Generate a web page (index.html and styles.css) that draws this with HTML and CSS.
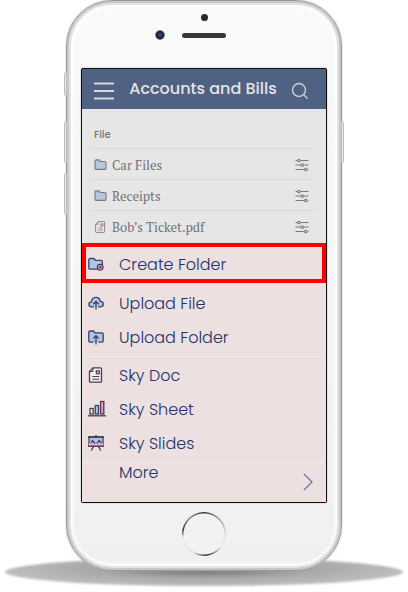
FILE: index.html
```
<!DOCTYPE html>
<html lang="en">
<head>
<meta charset="utf-8">
<meta name="viewport" content="width=device-width, initial-scale=1">
<title>Accounts and Bills</title>
<link rel="stylesheet" href="styles.css">
</head>
<body>
<svg class="defs" aria-hidden="true">
  <symbol id="folder" viewBox="0 0 14 12"><path d="M1 2.500V10q0 1.300 1.300 1.300h9.400q1.300 0 1.300-1.300V4q0-1.300-1.300-1.300H6.800L5.300 1H2.400Q1 1 1 2.500Z"/></symbol>
  <symbol id="sliders" viewBox="0 0 14 14"><path d="M.5 2.500h1.800m3 0h8.200M.5 7h5.200m3 0h4.800M.5 11.500h9m3 0h1"/><circle cx="3.800" cy="2.500" r="1.300"/><circle cx="7.200" cy="7" r="1.300"/><circle cx="10.800" cy="11.500" r="1.300"/></symbol>
  <symbol id="doc" viewBox="0 0 16 16"><path class="paper" d="M5 .8h7.500q1 0 1 1v12.400q0 1-1 1h-10q-1 0-1-1V4.500Z"/><path class="thin" d="M5 1v3.500H1.700M4.300 9.500h7M4.300 12.200h7"/><rect class="pink" x="8.300" y="3.800" width="3" height="3"/></symbol>
</svg>
<div class="stage">
  <div class="phone">
    <span class="side mute"></span><span class="side up"></span><span class="side down"></span><span class="side power"></span>
    <div class="top">
      <span class="sensor"></span>
      <span class="camera"></span>
      <span class="speaker"></span>
    </div>
    <main class="screen">
      <header class="bar">
        <button class="icon-button" type="button" aria-label="Menu"><svg width="22" height="18" viewBox="0 0 22 18"><path d="M1 1.500h20M1 9h20M1 16.500h20" stroke="#d9d6dc" stroke-width="2"/></svg></button>
        <h1>Accounts and Bills</h1>
        <button class="icon-button" type="button" aria-label="Search"><svg width="18" height="18" viewBox="0 0 18 18" fill="none" stroke="#d0cdd4" stroke-width="1.400"><circle cx="8" cy="8" r="6.500"/><path d="m12.500 12.500 4 4"/></svg></button>
      </header>
      <section class="files">
        <h2>File</h2>
        <ul>
          <li><svg class="file-icon" aria-hidden="true"><use href="#folder"/></svg><a href="#car">Car Files</a><button class="icon-button" type="button" aria-label="Car Files options"><svg class="sliders"><use href="#sliders"/></svg></button></li>
          <li><svg class="file-icon" aria-hidden="true"><use href="#folder"/></svg><a href="#receipts">Receipts</a><button class="icon-button" type="button" aria-label="Receipts options"><svg class="sliders"><use href="#sliders"/></svg></button></li>
          <li><svg class="file-icon pdf" aria-hidden="true"><use href="#doc"/></svg><a href="#ticket">Bob’s Ticket.pdf</a><button class="icon-button" type="button" aria-label="Ticket options"><svg class="sliders"><use href="#sliders"/></svg></button></li>
        </ul>
      </section>
      <nav class="sheet">
        <button class="action highlight" type="button">
          <svg class="glyph" viewBox="0 0 16 16"><path class="blue" d="M.8 3.800V12q0 1.200 1.200 1.200h11q1.300 0 1.300-1.200V5.600q0-1.300-1.300-1.300H7.500L5.800 2.500H2Q.8 2.500.8 3.800Z"/><circle class="pink" cx="12.200" cy="11.300" r="2.900"/><path class="thin" d="M12.200 9.700v3.200m-1.600-1.600h3.200"/></svg>
          Create Folder</button>
        <div class="group">
          <button class="action" type="button">
            <svg class="glyph" viewBox="0 0 16 16"><path class="blue" d="M6 11.800H3.500C-.2 11.500.2 7 3.500 6.800 3.800 1 11.600.8 12.300 6.400c4 .1 4 5.200.3 5.400H10"/><path class="line" d="M8 14.500V6.800M5.300 9.200 8 6.500l2.700 2.700"/></svg>
            Upload File</button>
          <button class="action" type="button">
            <svg class="glyph" viewBox="0 0 16 16"><path class="blue" d="M5.500 13.200H2q-1.200 0-1.200-1.200V3.300Q.8 2 2 2h3.300L7 3.800h6.800q1.400 0 1.400 1.300V12q0 1.200-1.400 1.200h-3.300"/><path class="line" d="M8 15.500V6.800M5.300 9.400 8 6.700l2.700 2.700"/></svg>
            Upload Folder</button>
        </div>
        <div class="group">
          <button class="action" type="button"><svg class="glyph"><use href="#doc"/></svg>Sky Doc</button>
          <button class="action" type="button">
            <svg class="glyph wide" viewBox="0 0 18 16"><path class="line" d="M0 14.800h18"/><rect class="paper" x="2" y="7.500" width="3.200" height="5.500"/><rect class="blue" x="7.300" y="4.500" width="3.200" height="8.500"/><rect class="pink heavy" x="12.600" y=".5" width="3.200" height="12.500"/></svg>
            Sky Sheet</button>
          <button class="action" type="button">
            <svg class="glyph" viewBox="0 0 16 16"><path class="blue" d="M1 2h14v9H1Z"/><path class="hill" d="M1 11V8.500L4 6l3 3 1 .3L9 8.500 11.500 6 15 8.500V11Z"/><path class="line" d="M0 2h16M8 0v2M0 11.200h16M5.500 11.500l-2.200 4M10.500 11.500l2.200 4M3 8l1.500-2.500L7 8.500M9 8.500l2-3L13.500 8"/></svg>
            Sky Slides</button>
        </div>
        <button class="more" type="button"><span>More</span><svg width="10" height="18" viewBox="0 0 10 18" fill="none" stroke="#68739b" stroke-width="1.200"><path d="m1 1 8 8-8 8"/></svg></button>
      </nav>
    </main>
    <div class="chin">
      <button class="home" type="button" aria-label="Home"></button>
    </div>
  </div>
</div>
</body>
</html>
```
FILE: styles.css
```
* { box-sizing: border-box; }
body { margin: 0; background: #fff; font-family: Poppins, Inter, sans-serif; }
button { border: 0; padding: 0; margin: 0; background: none; color: inherit; font: inherit; text-align: left; }
h1, h2, ul { margin: 0; padding: 0; }
a { color: inherit; text-decoration: none; }
.defs { position: absolute; width: 0; height: 0; }
.stage { position: relative; z-index: 0; max-width: 408px; margin: 0 auto; padding: 0 66px 21px; }
.stage::before {
  content: ""; position: absolute; z-index: -1; left: 5px; right: 5px; bottom: 6px; height: 28px;
  border-radius: 50%; filter: blur(1px);
  background: radial-gradient(ellipse at 50% 35%, #5e5e5e, #a8a8a8 40%, #c0c0c0 75%);
}
.phone {
  position: relative; padding: 0 14px; border: 1px solid #96989b; border-radius: 46px;
  background: linear-gradient(#fafafa, #f0f0f0);
  box-shadow: inset 0 0 0 2px #c6c8cb, inset 0 0 0 4px #e2e3e4, inset 0 0 3px 6px #fff, 0 0 2px #bbb;
}
.side { position: absolute; left: -3px; width: 3px; height: 42px; border: 1px solid #bbb; border-radius: 2px 0 0 2px; background: #eee; }
.mute { top: 71px; height: 24px; }
.up { top: 120px; }
.down { top: 172px; }
.power { left: auto; right: -3px; top: 120px; border-radius: 0 2px 2px 0; }
.top { display: grid; grid-template-columns: 1fr 44px 1fr; grid-template-rows: 8px 20px; align-content: start; align-items: center; justify-items: center; height: 67px; padding-top: 12px; }
.sensor { grid-column: 2; width: 7px; height: 7px; border-radius: 50%; background: #292525; }
.camera { grid-row: 2; grid-column: 1; justify-self: end; width: 10px; height: 10px; margin-right: 17px; margin-top: 8px; border: 1px solid #777; border-radius: 50%; background: radial-gradient(#315698, #1b1b25 60%); }
.speaker { grid-row: 2; grid-column: 2; width: 44px; height: 5px; margin-top: 8px; border-radius: 3px; background: #353938; }
.screen { border: 1px solid #111; border-radius: 2px; background: #e6e6e6; box-shadow: 0 0 1px #333; }
.bar { display: flex; align-items: center; height: 40px; padding: 0 17px 0 11px; background: #4f6283; color: #e5e3e6; }
.bar svg { display: block; margin-top: 4px; }
h1 { flex: 1; font-size: 16px; line-height: 24px; font-weight: 500; text-align: center; }
.files { padding: 0 10px 0 7px; color: #747477; }
h2 { display: flex; align-items: flex-end; height: 40px; padding: 0 5px 5px; border-bottom: 1px solid #dadada; font-size: 10px; line-height: 16px; font-weight: 500; }
.files ul { font: 13px/20px "PT Serif", "Noto Serif", "Liberation Serif", serif; }
.files li { display: flex; align-items: center; height: 31px; padding: 1px 7px 0 5px; border-bottom: 1px solid #dadada; }
.files li:last-child { height: 32px; }
.files li a { flex: 1; }
.file-icon { width: 13px; height: 11px; margin-right: 5px; fill: #b6c6e1; stroke: #77777c; stroke-width: 1.200; }
.pdf { height: 12px; fill: none; opacity: .6; }
.sliders { display: block; width: 14px; height: 14px; fill: none; stroke: #807880; stroke-width: 1.100; }
.sheet { background: #ece0e0; color: #22336c; font-size: 16px; font-weight: 300; }
.action { display: flex; align-items: center; gap: 15px; width: 100%; height: 34px; padding-left: 6px; }
.highlight { height: 40px; padding: 2px 0 0 2px; border: 4px solid #f00; }
.glyph { width: 16px; height: 16px; overflow: visible; fill: none; }
.wide { width: 18px; margin-right: -2px; }
.group { padding: 3px 0 2px; border-bottom: 1px solid #f0ebe9; margin: 0 3px; }
.group .action { padding-left: 3px; }
.group + .group { padding: 1px 0 2px; }
.blue { fill: #abc5ee; stroke: #43415b; stroke-width: 1.300; }
.pink { fill: #e6a6d8; stroke: #51374f; stroke-width: 1.100; }
.heavy { stroke-width: 1.300; }
.hill { fill: #e6a6e0; }
.paper { fill: #f4eeee; stroke: #484047; stroke-width: 1.300; }
.line { fill: none; stroke: #423e50; stroke-width: 1.300; }
.thin { fill: none; stroke: #484047; stroke-width: 1; }
.more { display: flex; justify-content: space-between; width: 100%; height: 39px; padding: 0 13px 0 37px; line-height: 20px; }
.more svg { margin-top: 10px; }
.chin { display: flex; justify-content: center; padding: 9px 0 14px; }
.home { width: 44px; height: 44px; border-radius: 50%; background: radial-gradient(circle, #f2f2f2 20px, transparent 21px), conic-gradient(#333, #999 12%, #ddd 25%, #eee 35%, #222 48%, #ddd 58%, #eee 72%, #333 78%, #888 88%, #333); }
```
